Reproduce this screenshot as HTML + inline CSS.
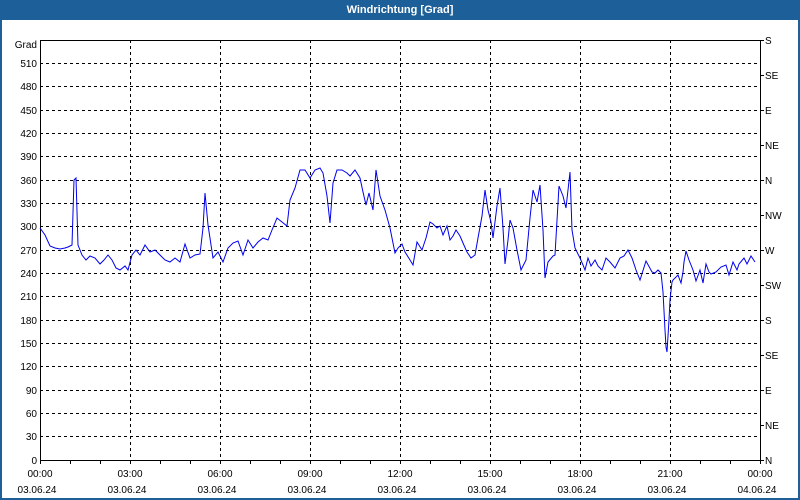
<!DOCTYPE html>
<html><head><meta charset="utf-8"><style>
html,body{margin:0;padding:0;background:#fff;}
body{width:800px;height:500px;overflow:hidden;position:relative;font-family:"Liberation Sans",sans-serif;}
</style></head><body>
<svg width="800" height="500" viewBox="0 0 800 500" xmlns="http://www.w3.org/2000/svg" style="position:absolute;left:0;top:0">
<rect x="0" y="0" width="800" height="500" fill="#1c5f99"/>
<rect x="2" y="20" width="796" height="478" fill="#fff"/>
<text x="400" y="13" font-size="11" font-weight="bold" fill="#fff" text-anchor="middle" font-family="Liberation Sans, sans-serif">Windrichtung [Grad]</text>
<g stroke="#000" stroke-width="1" stroke-dasharray="3,3" fill="none">
<path d="M40 63.5H760M40 86.5H760M40 110.5H760M40 133.5H760M40 156.5H760M40 180.5H760M40 203.5H760M40 226.5H760M40 250.5H760M40 273.5H760M40 296.5H760M40 320.5H760M40 343.5H760M40 366.5H760M40 390.5H760M40 413.5H760M40 436.5H760"/>
<path d="M130.5 40V460M220.5 40V460M310.5 40V460M400.5 40V460M490.5 40V460M580.5 40V460M670.5 40V460"/>
</g>
<g stroke="#000" stroke-width="1" fill="none">
<path d="M40.5 40V460.5H760.5V40M40 40.5H760"/>
<path d="M70.5 460V464M100.5 460V464M130.5 460V464M160.5 460V464M190.5 460V464M220.5 460V464M250.5 460V464M280.5 460V464M310.5 460V464M340.5 460V464M370.5 460V464M400.5 460V464M430.5 460V464M460.5 460V464M490.5 460V464M520.5 460V464M550.5 460V464M580.5 460V464M610.5 460V464M640.5 460V464M670.5 460V464M700.5 460V464M730.5 460V464M40.5 460V464M760.5 460V464"/>
<path d="M760 40.5H764M760 75.5H764M760 110.5H764M760 145.5H764M760 180.5H764M760 215.5H764M760 250.5H764M760 285.5H764M760 320.5H764M760 355.5H764M760 390.5H764M760 425.5H764M760 460.5H764"/>
</g>
<g font-size="10" fill="#000" text-anchor="end" font-family="Liberation Sans, sans-serif">
<text x="37" y="48">Grad</text>
<text x="37" y="67">510</text><text x="37" y="90">480</text><text x="37" y="114">450</text><text x="37" y="137">420</text><text x="37" y="160">390</text><text x="37" y="184">360</text><text x="37" y="207">330</text><text x="37" y="230">300</text><text x="37" y="254">270</text><text x="37" y="277">240</text><text x="37" y="300">210</text><text x="37" y="324">180</text><text x="37" y="347">150</text><text x="37" y="370">120</text><text x="37" y="394">90</text><text x="37" y="417">60</text><text x="37" y="440">30</text><text x="37" y="464">0</text>
</g>
<g font-size="10" fill="#000" font-family="Liberation Sans, sans-serif">
<text x="765" y="44">S</text><text x="765" y="79">SE</text><text x="765" y="114">E</text><text x="765" y="149">NE</text><text x="765" y="184">N</text><text x="765" y="219">NW</text><text x="765" y="254">W</text><text x="765" y="289">SW</text><text x="765" y="324">S</text><text x="765" y="359">SE</text><text x="765" y="394">E</text><text x="765" y="429">NE</text><text x="765" y="464">N</text>
</g>
<g font-size="10" fill="#000" text-anchor="middle" font-family="Liberation Sans, sans-serif">
<text x="40" y="477">00:00</text><text x="37" y="493">03.06.24</text>
<text x="130" y="477">03:00</text><text x="127" y="493">03.06.24</text>
<text x="220" y="477">06:00</text><text x="217" y="493">03.06.24</text>
<text x="310" y="477">09:00</text><text x="307" y="493">03.06.24</text>
<text x="400" y="477">12:00</text><text x="397" y="493">03.06.24</text>
<text x="490" y="477">15:00</text><text x="487" y="493">03.06.24</text>
<text x="580" y="477">18:00</text><text x="577" y="493">03.06.24</text>
<text x="670" y="477">21:00</text><text x="667" y="493">03.06.24</text>
<text x="760" y="477">00:00</text><text x="757" y="493">04.06.24</text>
</g>
<polyline fill="none" stroke="#0000ee" stroke-width="1" points="40,228 45,235 50,246 55,248 60,249 65,248 68,247 72,245 74,180 76,178 78,245 82,255 86,260 90,256 95,258 100,264 104,260 108,255 112,260 116,268 120,270 125,266 128,270 132,255 136,250 140,255 145,245 150,252 155,250 160,255 165,260 170,262 175,258 180,262 185,244 190,258 195,255 200,254 203,228 205,193 208,225 213,258 218,252 223,262 228,248 233,243 238,241 243,255 248,240 253,248 258,242 263,238 268,240 272,230 277,218 282,222 287,226 290,200 295,188 300,170 305,170 310,178 315,170 320,168 323,173 327,196 330,223 333,183 337,170 342,170 347,173 350,176 355,170 360,178 363,192 366,205 369,193 373,210 376,170 380,196 385,210 390,228 393,243 395,253 398,248 402,244 405,252 410,260 413,265 417,242 422,250 426,238 430,222 433,224 437,228 440,226 443,235 447,226 450,240 453,236 456,230 460,236 463,243 467,252 471,258 475,255 478,238 482,216 485,190 488,210 491,222 493,238 497,206 500,188 503,228 505,264 508,240 510,220 513,228 517,250 521,270 526,260 530,218 533,190 537,202 540,185 543,230 545,278 548,262 553,256 555,255 559,186 563,196 566,208 570,172 572,230 575,248 580,258 583,265 585,270 588,258 591,266 595,260 598,266 602,270 606,258 610,262 615,268 620,258 624,256 628,250 632,258 636,270 640,280 646,261 652,272 655,273 658,270 661,273 663,292 665,330 666,347 667,352 669,320 670,300 672,282 673,280 678,275 681,283 683,272 684,262 686,251 689,260 693,270 696,281 700,270 703,283 706,264 709,272 711,274 716,272 721,267 726,265 729,275 733,262 737,270 739,264 744,258 747,264 751,256 755,262"/>
</svg>
</body></html>
